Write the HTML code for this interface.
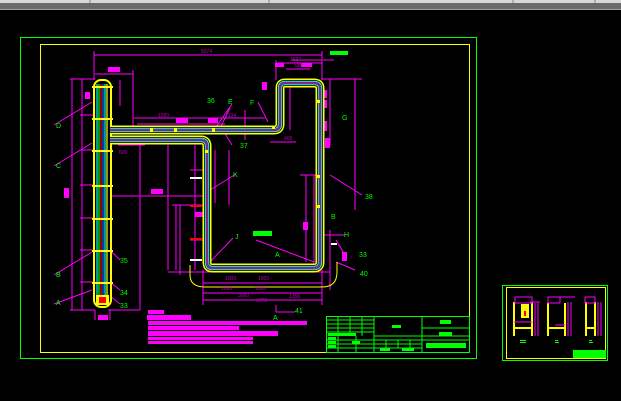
<!DOCTYPE html>
<html><head><meta charset="utf-8"><style>
html,body{margin:0;padding:0;background:#000;width:621px;height:401px;overflow:hidden}
svg{display:block}
text{font-family:"Liberation Sans",sans-serif}
</style></head><body>
<svg width="621" height="401" viewBox="0 0 621 401" xmlns="http://www.w3.org/2000/svg">
<rect width="621" height="401" fill="#000"/>
<!-- top bar -->
<rect x="0" y="0" width="621" height="3" fill="#d8d8d8"/>
<rect x="0" y="3" width="621" height="6" fill="#6a6a6a"/>
<rect x="0" y="9" width="621" height="1" fill="#a0a0a0"/>
<g stroke="#888" stroke-width="1"><line x1="90" y1="0" x2="90" y2="3"/><line x1="269" y1="0" x2="269" y2="3"/><line x1="513" y1="0" x2="513" y2="3"/><line x1="595" y1="0" x2="595" y2="3"/></g>

<!-- frames -->
<rect x="20.5" y="37.5" width="456" height="321" fill="none" stroke="#00ff00" stroke-width="1"/>
<rect x="40.5" y="44.5" width="429" height="308" fill="none" stroke="#ffff00" stroke-width="1"/>

<!-- dimension lines magenta -->
<g stroke="#ff00ff" stroke-width="1" fill="none">
<line x1="94" y1="55" x2="322" y2="55"/>
<line x1="94" y1="51" x2="94" y2="80"/><line x1="322" y1="51" x2="322" y2="80"/>
<line x1="95" y1="74" x2="133" y2="74"/><line x1="133" y1="70" x2="133" y2="128"/>
<line x1="70" y1="79" x2="95" y2="79"/>
<line x1="70" y1="310" x2="95" y2="310"/>
<line x1="72" y1="79" x2="72" y2="310"/><line x1="82" y1="79" x2="82" y2="310"/>
<line x1="80" y1="115" x2="95" y2="115"/><line x1="80" y1="150" x2="95" y2="150"/><line x1="80" y1="185" x2="95" y2="185"/><line x1="80" y1="218" x2="95" y2="218"/><line x1="80" y1="250" x2="95" y2="250"/><line x1="80" y1="282" x2="95" y2="282"/>
<line x1="120" y1="80" x2="120" y2="106"/>
<line x1="134" y1="118" x2="265" y2="118"/>
<line x1="137" y1="124" x2="225" y2="124"/>
<line x1="112" y1="196" x2="210" y2="196"/>
<line x1="140" y1="145" x2="140" y2="310"/>
<line x1="108" y1="310" x2="140" y2="310"/>
<line x1="168" y1="145" x2="168" y2="270"/>
<line x1="176" y1="205" x2="176" y2="270"/>
<line x1="172" y1="205" x2="195" y2="205"/>
<line x1="180" y1="205" x2="180" y2="275"/>
<line x1="168" y1="272" x2="330" y2="272"/>
<line x1="203" y1="283" x2="322" y2="283"/>
<line x1="203" y1="293" x2="322" y2="293"/>
<line x1="203" y1="300" x2="322" y2="300"/>
<line x1="203" y1="270" x2="203" y2="305"/><line x1="322" y1="270" x2="322" y2="305"/>
<line x1="276" y1="60" x2="276" y2="80"/><line x1="276" y1="63" x2="322" y2="63"/>
<line x1="286" y1="69" x2="310" y2="69"/>
<line x1="322" y1="79" x2="362" y2="79"/><line x1="355" y1="79" x2="355" y2="210"/>
<line x1="330" y1="79" x2="330" y2="145"/>
<line x1="314" y1="175" x2="314" y2="268"/>
<line x1="300" y1="175" x2="320" y2="175"/>
<line x1="306" y1="175" x2="306" y2="262"/>
<line x1="318" y1="235" x2="345" y2="235"/>
<line x1="330" y1="230" x2="330" y2="290"/>
<line x1="245" y1="110" x2="245" y2="140"/>
<line x1="215" y1="150" x2="215" y2="203"/>
<line x1="229" y1="150" x2="229" y2="205"/>
<line x1="290" y1="80" x2="290" y2="130"/>
<line x1="270" y1="142" x2="296" y2="142"/>
<line x1="118" y1="145" x2="145" y2="145"/>
<line x1="54" y1="125" x2="92" y2="102"/><line x1="54" y1="166" x2="92" y2="143"/>
<line x1="54" y1="275" x2="92" y2="252"/><line x1="54" y1="304" x2="92" y2="290"/>
<line x1="110" y1="250" x2="120" y2="260"/><line x1="110" y1="282" x2="120" y2="290"/><line x1="110" y1="296" x2="120" y2="304"/>
<line x1="230" y1="108" x2="218" y2="132"/><line x1="232" y1="104" x2="214" y2="130"/>
<line x1="258" y1="102" x2="268" y2="122"/>
<line x1="232" y1="145" x2="224" y2="132"/>
<line x1="236" y1="174" x2="210" y2="190"/>
<line x1="233" y1="238" x2="210" y2="262"/>
<line x1="256" y1="240" x2="314" y2="262"/>
<line x1="330" y1="175" x2="362" y2="195"/>
<line x1="336" y1="240" x2="345" y2="255"/>
<line x1="336" y1="262" x2="355" y2="270"/>
<line x1="276" y1="305" x2="276" y2="312"/><line x1="276" y1="312" x2="295" y2="312"/>
<line x1="195" y1="145" x2="195" y2="270"/><line x1="190" y1="170" x2="205" y2="170"/><line x1="190" y1="205" x2="205" y2="205"/><line x1="190" y1="240" x2="205" y2="240"/>
<line x1="95" y1="310" x2="95" y2="320"/><line x1="110" y1="310" x2="110" y2="320"/>
<line x1="292" y1="60" x2="322" y2="60"/><line x1="323" y1="60" x2="334" y2="60"/>
</g>
<!-- magenta blocks -->
<g fill="#ff00ff">
<rect x="108" y="67" width="12" height="5"/>
<rect x="275" y="63" width="9" height="4"/><rect x="301" y="63" width="11" height="4"/>
<rect x="262" y="82" width="5" height="8"/>
<rect x="322" y="90" width="5" height="8"/><rect x="323" y="100" width="4" height="8"/><rect x="323" y="121" width="4" height="10"/><rect x="325" y="138" width="5" height="10"/>
<rect x="85" y="92" width="5" height="7"/>
<rect x="64" y="188" width="5" height="10"/>
<rect x="176" y="118" width="12" height="5"/><rect x="208" y="118" width="10" height="5"/>
<rect x="151" y="189" width="12" height="5"/>
<rect x="195" y="212" width="9" height="5"/>
<rect x="303" y="222" width="5" height="8"/><rect x="342" y="252" width="5" height="9"/>
<rect x="98" y="315" width="10" height="5"/>
<rect x="148" y="310" width="16" height="4"/>
<rect x="147" y="315" width="44" height="5"/>
<rect x="148" y="321" width="159" height="4"/>
<rect x="148" y="326" width="91" height="4"/>
<rect x="148" y="331" width="130" height="5"/>
<rect x="148" y="337" width="105" height="3"/>
<rect x="148" y="341" width="105" height="3"/>
</g>
<!-- green label blocks -->
<rect x="330" y="51" width="18" height="4" fill="#00ff00"/>
<rect x="253" y="231" width="19" height="5" fill="#00ff00"/>

<!-- left vertical pipe -->
<rect x="94" y="80" width="17" height="227" rx="7" fill="none" stroke="#ffff00" stroke-width="2"/>
<g stroke-width="1.2">
<line x1="97" y1="84" x2="97" y2="304" stroke="#00ffff"/>
<line x1="99" y1="84" x2="99" y2="304" stroke="#00ff00"/>
<line x1="101" y1="84" x2="101" y2="304" stroke="#ff0000"/>
<line x1="103" y1="84" x2="103" y2="304" stroke="#0066ff"/>
<line x1="105" y1="84" x2="105" y2="304" stroke="#00ffff"/>
<line x1="107" y1="84" x2="107" y2="304" stroke="#ffff00"/>
</g>
<g fill="#ffff00"><rect x="92" y="86" width="21" height="2"/><rect x="92" y="118" width="21" height="2"/><rect x="92" y="150" width="21" height="2"/><rect x="92" y="185" width="21" height="2"/><rect x="92" y="218" width="21" height="2"/><rect x="92" y="250" width="21" height="2"/><rect x="92" y="282" width="21" height="2"/><rect x="96" y="295" width="13" height="10"/></g>
<rect x="99" y="297" width="7" height="6" fill="#ff0000"/>

<!-- loop pipe -->
<g fill="none" stroke-linejoin="round">
<path id="lp" d="M110,130 H274 Q280,130 280,124 V88 Q280,83 285,83 H314 Q320,83 320,88 V262 Q320,268 314,268 H212 Q207,268 207,262 V146 Q207,140 201,140 H110"/>
<use href="#lp" stroke="#ffff00" stroke-width="9"/>
<use href="#lp" stroke="#000" stroke-width="6"/>
<use href="#lp" stroke="#00ffff" stroke-width="4.5"/>
<use href="#lp" stroke="#ff0000" stroke-width="2.5"/>
<use href="#lp" stroke="#0055ff" stroke-width="1"/>
</g>
<path d="M190,265 V275 Q190,287 205,287 H322 Q337,287 337,272 V262" fill="none" stroke="#ffff00" stroke-width="1"/>
<g fill="#ffff00"><rect x="174" y="128" width="3" height="4"/><rect x="212" y="128" width="3" height="4"/><rect x="150" y="128" width="3" height="4"/><rect x="205" y="150" width="3" height="3"/><rect x="317" y="100" width="3" height="3"/><rect x="317" y="175" width="3" height="3"/><rect x="317" y="205" width="3" height="3"/><rect x="272" y="126" width="3" height="3"/></g>
<g fill="#ffffff"><rect x="190" y="177" width="12" height="2"/><rect x="190" y="259" width="12" height="2"/><rect x="331" y="243" width="6" height="2"/></g>
<g fill="#ff0000"><rect x="190" y="205" width="12" height="2"/><rect x="190" y="238" width="12" height="2"/></g>

<!-- dimension text -->
<g fill="#c000c0" font-size="5">
<text x="201" y="53">5074</text><text x="290" y="61">1524</text><text x="294" y="67">530</text>
<text x="158" y="117">1000</text><text x="225" y="117">2134</text>
<text x="119" y="154">600</text><text x="284" y="140">400</text>
<text x="221" y="290">1000</text><text x="255" y="290">1000</text><text x="238" y="297">3000</text><text x="289" y="298">1356</text><text x="256" y="302">3778</text>
<text x="225" y="280">1000</text><text x="258" y="280">1000</text>
</g>
<!-- green labels -->
<g fill="#00ff00" font-size="7">
<text x="207" y="103">36</text><text x="228" y="104">E</text><text x="250" y="105">F</text><text x="240" y="148">37</text>
<text x="233" y="177">K</text><text x="235" y="239">J</text><text x="275" y="257">A</text>
<text x="342" y="120">G</text><text x="365" y="199">38</text><text x="331" y="219">B</text><text x="344" y="237">H</text>
<text x="359" y="257">33</text><text x="360" y="276">40</text><text x="295" y="313">41</text><text x="273" y="320">A</text>
<text x="56" y="128">D</text><text x="56" y="168">C</text><text x="56" y="277">B</text><text x="56" y="305">A</text>
<text x="120" y="263">35</text><text x="120" y="295">34</text><text x="120" y="308">33</text>
</g>

<!-- title block -->
<g stroke="#00ff00" stroke-width="1" fill="none">
<rect x="326.5" y="316.5" width="143" height="36"/>
<line x1="374" y1="316" x2="374" y2="352"/><line x1="422" y1="316" x2="422" y2="352"/>
<line x1="374" y1="336" x2="470" y2="336"/><line x1="422" y1="328" x2="470" y2="328"/><line x1="422" y1="340" x2="470" y2="340"/>
<line x1="326" y1="320" x2="374" y2="320"/><line x1="326" y1="324" x2="374" y2="324"/><line x1="326" y1="328" x2="374" y2="328"/><line x1="326" y1="332" x2="374" y2="332"/><line x1="326" y1="340" x2="422" y2="340"/><line x1="326" y1="344" x2="422" y2="344"/><line x1="326" y1="348" x2="422" y2="348"/>
<line x1="338" y1="316" x2="338" y2="352"/><line x1="350" y1="316" x2="350" y2="336"/><line x1="362" y1="316" x2="362" y2="336"/>
<line x1="356" y1="336" x2="356" y2="352"/><line x1="386" y1="340" x2="386" y2="348"/><line x1="398" y1="340" x2="398" y2="348"/><line x1="410" y1="340" x2="410" y2="348"/>
</g>
<g fill="#00ff00"><rect x="392" y="325" width="9" height="3"/><rect x="440" y="320" width="11" height="4"/><rect x="439" y="332" width="13" height="4"/><rect x="426" y="343" width="40" height="5"/><rect x="328" y="333" width="28" height="3"/><rect x="328" y="337" width="8" height="3"/><rect x="328" y="341" width="8" height="3"/><rect x="328" y="345" width="8" height="3"/><rect x="352" y="341" width="8" height="3"/><rect x="380" y="348" width="10" height="3"/><rect x="402" y="348" width="12" height="3"/></g>

<!-- small drawing -->
<rect x="502.5" y="285.5" width="105" height="75" fill="none" stroke="#00ff00" stroke-width="1"/>
<rect x="506.5" y="287.5" width="99" height="71" fill="none" stroke="#ffff00" stroke-width="1"/>
<g stroke="#ffff00" stroke-width="2" fill="none">
<line x1="514" y1="302" x2="514" y2="336"/><line x1="532" y1="302" x2="532" y2="336"/>
<line x1="548" y1="303" x2="548" y2="336"/><line x1="565" y1="303" x2="565" y2="336"/>
<line x1="586" y1="302" x2="586" y2="336"/><line x1="595" y1="302" x2="595" y2="336"/>
<line x1="514" y1="328" x2="532" y2="328"/><line x1="548" y1="328" x2="565" y2="328"/><line x1="586" y1="328" x2="595" y2="328"/>
</g>
<rect x="521" y="304" width="8" height="14" fill="#ffff00"/><rect x="524" y="311" width="2" height="5" fill="#ff0000"/>
<g stroke="#ff00ff" stroke-width="1" fill="none">
<rect x="515" y="297" width="17" height="6"/><rect x="548" y="297" width="12" height="6"/><rect x="585" y="297" width="10" height="6"/>
<line x1="535" y1="303" x2="535" y2="336"/><line x1="538" y1="303" x2="538" y2="336"/><line x1="530" y1="302" x2="540" y2="302"/>
<line x1="568" y1="302" x2="568" y2="336"/><line x1="571" y1="302" x2="571" y2="336"/><line x1="558" y1="297" x2="575" y2="297"/>
<line x1="598" y1="302" x2="598" y2="336"/><line x1="601" y1="302" x2="601" y2="336"/>
<line x1="514" y1="322" x2="532" y2="322"/><line x1="555" y1="325" x2="565" y2="325"/>
</g>
<g fill="#00ff00"><rect x="520" y="340" width="6" height="1"/><rect x="520" y="342" width="6" height="1"/><rect x="555" y="340" width="3" height="1"/><rect x="555" y="342" width="4" height="1"/><rect x="589" y="340" width="3" height="1"/><rect x="589" y="342" width="4" height="1"/><rect x="573" y="350" width="33" height="8"/></g>
</svg>
</body></html>
